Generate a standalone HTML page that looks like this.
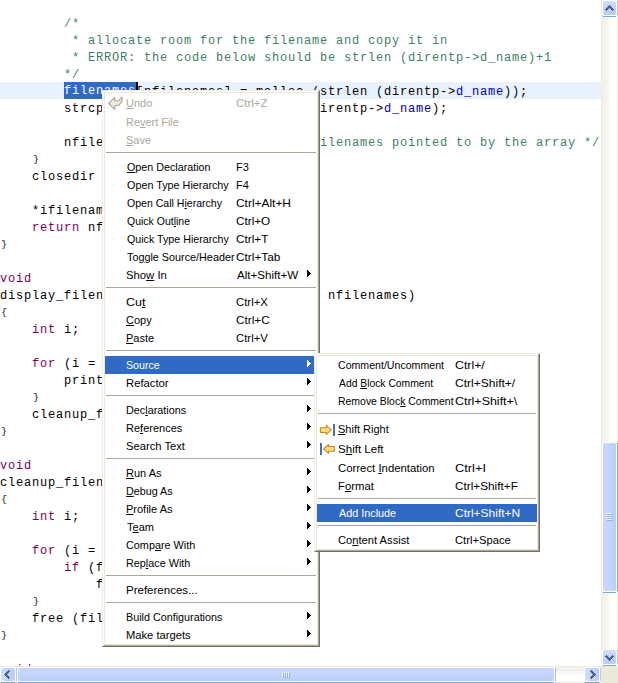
<!DOCTYPE html>
<html><head><meta charset="utf-8">
<style>
*{margin:0;padding:0;box-sizing:border-box}
html,body{width:618px;height:683px;overflow:hidden;background:#fff}
body{position:relative;font-family:"Liberation Sans",sans-serif}
#code{position:absolute;left:0;top:0;width:601px;height:666px;overflow:hidden;background:#fff}
.curline{position:absolute;left:0;top:82px;width:601px;height:17px;background:#E8F2FE}
.ln{position:absolute;left:0;height:17px;line-height:17px;white-space:pre;font-family:"Liberation Mono",monospace;font-size:12px;letter-spacing:0.8px;color:#000;padding-top:2px}
.k{color:#7F0055}
.br{display:inline-block;width:8px;text-align:center;font-size:9.5px;letter-spacing:0;vertical-align:top;line-height:15px;position:relative;top:0px}
.c{color:#3F7F5F}
.f{color:#0000C0}
.sel{background:#316AC5;color:#fff;display:inline-block;height:17px;margin-top:-2px;padding-top:2px;vertical-align:top;line-height:15px}
.caret{position:absolute;left:136px;top:82px;width:2px;height:17px;background:#000}
.menu{position:absolute;background:#fff;border-style:solid;border-width:1px;border-color:#F1EFE2 #716F64 #716F64 #F1EFE2}
.menu>.m2{border-style:solid;border-width:1px;border-color:#fff #ACA899 #ACA899 #fff;width:100%;height:100%}
.menu>.m2>.m3{border:1px solid #ECE9D8;width:100%;height:100%;background:#fff}
.it{position:relative;font-size:11px;color:#000}
.it .lb,.it .sc{position:absolute;white-space:pre;line-height:18px;height:18px;transform-origin:0 0}
.dis{color:#ACA899}
.hi{background:#316AC5;color:#fff}
.sep{position:relative;height:9px}
.sep i{position:absolute;left:1px;right:1px;top:3px;height:1px;background:#ACA899}
u{text-decoration:underline;text-decoration-thickness:1px;text-underline-offset:1px}
.ar{position:absolute;left:202px;top:4px;fill:#000}
.hi .ar{fill:#fff}
.ico{position:absolute}
#mm{left:102px;top:90px;width:218px;height:557px}
#mm .m3{padding-top:0}
#sm{left:314px;top:353px;width:226px;height:199px}
/* scrollbars */
#vs{position:absolute;left:601px;top:0;width:17px;height:666px;background:linear-gradient(90deg,#EDEBE3 0 1px,#F3F2EA 1px 5px,#F6F5F1 5px 7px,#FCFCF6 7px 9px,#FFFFFF 9px 16px,#EDECE6 16px 17px)}
#hs{position:absolute;left:0;top:666px;width:601px;height:17px;background:linear-gradient(180deg,#EDEBE3 0 1px,#F3F2EA 1px 5px,#F6F5F1 5px 7px,#FCFCF6 7px 9px,#FFFFFF 9px 16px,#EDECE6 16px 17px)}
#corner{position:absolute;left:601px;top:666px;width:17px;height:17px;background:#ECE9D8}
.sb{position:absolute}
.sbw{position:absolute;border:1px solid #FFFFFF;border-radius:3px;background:#FFFFFF}
.sbb{position:absolute;border-radius:2px}
.vbody{background:linear-gradient(180deg,#D2DEFD 0%,#C3D3FC 45%,#B7CBF8 100%)}
.hbody{background:linear-gradient(90deg,#D2DEFD 0%,#C3D3FC 45%,#B7CBF8 100%)}
.tvb{background:linear-gradient(90deg,#CBD5FD 0%,#C6D6FC 40%,#BCD1FB 80%,#B4CCFA 100%)}
.thb{background:linear-gradient(180deg,#CBD5FD 0%,#C6D6FC 40%,#BCD1FB 80%,#B4CCFA 100%)}
.sh{position:absolute;background:#84A6DD}
.grip{position:absolute}
</style></head><body>
<div id="code">
<div class="curline"></div>
<div class="ln" style="top:14px"><span class="c">        /*</span></div>
<div class="ln" style="top:31px"><span class="c">         * allocate room for the filename and copy it in</span></div>
<div class="ln" style="top:48px"><span class="c">         * ERROR: the code below should be strlen (direntp-&gt;d_name)+1</span></div>
<div class="ln" style="top:65px"><span class="c">        */</span></div>
<div class="ln" style="top:82px">        <span class="sel">filenames</span>[nfilenames] = malloc (strlen (direntp-&gt;<span class="f">d_name</span>));</div>
<div class="ln" style="top:99px">        strcpy (filenames[nfilenames], direntp-&gt;<span class="f">d_name</span>);</div>
<div class="ln" style="top:116px"></div>
<div class="ln" style="top:133px">        nfilenames++; <span class="c">/* the number of filenames pointed to by the array */</span></div>
<div class="ln" style="top:150px">    <span class="br">}</span></div>
<div class="ln" style="top:167px">    closedir (dirp);</div>
<div class="ln" style="top:184px"></div>
<div class="ln" style="top:201px">    *ifilenames = filenames;</div>
<div class="ln" style="top:218px">    <span class="k">return</span> nfilenames;</div>
<div class="ln" style="top:235px"><span class="br">}</span></div>
<div class="ln" style="top:252px"></div>
<div class="ln" style="top:269px"><span class="k">void</span></div>
<div class="ln" style="top:286px">display_filenames (<span class="k">char</span> **filenames, <span class="k">int</span> nfilenames)</div>
<div class="ln" style="top:303px"><span class="br">{</span></div>
<div class="ln" style="top:320px">    <span class="k">int</span> i;</div>
<div class="ln" style="top:337px"></div>
<div class="ln" style="top:354px">    <span class="k">for</span> (i = 0; i &lt; nfilenames; i++) <span class="br">{</span></div>
<div class="ln" style="top:371px">        printf (&quot;%s\n&quot;, filenames[i]);</div>
<div class="ln" style="top:388px">    <span class="br">}</span></div>
<div class="ln" style="top:405px">    cleanup_filenames (filenames, nfilenames);</div>
<div class="ln" style="top:422px"><span class="br">}</span></div>
<div class="ln" style="top:439px"></div>
<div class="ln" style="top:456px"><span class="k">void</span></div>
<div class="ln" style="top:473px">cleanup_filenames (<span class="k">char</span> **filenames, <span class="k">int</span> nfilenames)</div>
<div class="ln" style="top:490px"><span class="br">{</span></div>
<div class="ln" style="top:507px">    <span class="k">int</span> i;</div>
<div class="ln" style="top:524px"></div>
<div class="ln" style="top:541px">    <span class="k">for</span> (i = 0; i &lt; nfilenames; i++) <span class="br">{</span></div>
<div class="ln" style="top:558px">        <span class="k">if</span> (filenames[i] != NULL)</div>
<div class="ln" style="top:575px">            free (filenames[i]);</div>
<div class="ln" style="top:592px">    <span class="br">}</span></div>
<div class="ln" style="top:609px">    free (filenames);</div>
<div class="ln" style="top:626px"><span class="br">}</span></div>
<div class="ln" style="top:643px"></div>
<div class="ln" style="top:660px"><span class="k">void</span></div>
<div class="caret"></div>
</div>
<div id="vs"></div><div id="hs"></div><div class="sbw" style="left:602px;top:0px;width:15px;height:16px"></div><div class="sbb vbody" style="left:603px;top:1px;width:13px;height:14px"></div><div class="sh" style="left:603px;top:16px;width:13px;height:1px;background:#84A6DD"></div><div class="sh" style="left:617px;top:1px;width:1px;height:14px;background:#B4CAE8"></div><svg class="sb" width="9" height="6" style="left:605px;top:5px" shape-rendering="crispEdges" fill="#4D6185"><rect x="4" y="0" width="1" height="1"/><rect x="3" y="1" width="1" height="1"/><rect x="4" y="1" width="1" height="1"/><rect x="5" y="1" width="1" height="1"/><rect x="2" y="2" width="1" height="1"/><rect x="3" y="2" width="1" height="1"/><rect x="4" y="2" width="1" height="1"/><rect x="5" y="2" width="1" height="1"/><rect x="6" y="2" width="1" height="1"/><rect x="1" y="3" width="1" height="1"/><rect x="2" y="3" width="1" height="1"/><rect x="3" y="3" width="1" height="1"/><rect x="5" y="3" width="1" height="1"/><rect x="6" y="3" width="1" height="1"/><rect x="7" y="3" width="1" height="1"/><rect x="0" y="4" width="1" height="1"/><rect x="1" y="4" width="1" height="1"/><rect x="2" y="4" width="1" height="1"/><rect x="6" y="4" width="1" height="1"/><rect x="7" y="4" width="1" height="1"/><rect x="8" y="4" width="1" height="1"/><rect x="1" y="5" width="1" height="1"/><rect x="7" y="5" width="1" height="1"/></svg><div class="sbw" style="left:602px;top:442px;width:15px;height:150px"></div><div class="sbb tvb" style="left:603px;top:443px;width:13px;height:148px"></div><div class="sh" style="left:603px;top:592px;width:13px;height:1px;background:#84A6DD"></div><div class="sh" style="left:617px;top:443px;width:1px;height:148px;background:#7EA7CC"></div><svg class="sb" width="7" height="8" style="left:606px;top:513px" shape-rendering="crispEdges"><rect x="0" y="0" width="6" height="1" fill="#EEF3FE"/><rect x="1" y="1" width="6" height="1" fill="#8DB0F4"/><rect x="0" y="2" width="6" height="1" fill="#EEF3FE"/><rect x="1" y="3" width="6" height="1" fill="#8DB0F4"/><rect x="0" y="4" width="6" height="1" fill="#EEF3FE"/><rect x="1" y="5" width="6" height="1" fill="#8DB0F4"/><rect x="0" y="6" width="6" height="1" fill="#EEF3FE"/><rect x="1" y="7" width="6" height="1" fill="#8DB0F4"/></svg><div class="sbw" style="left:602px;top:649px;width:15px;height:16px"></div><div class="sbb vbody" style="left:603px;top:650px;width:13px;height:14px"></div><div class="sh" style="left:603px;top:665px;width:13px;height:1px;background:#84A6DD"></div><div class="sh" style="left:617px;top:650px;width:1px;height:14px;background:#B4CAE8"></div><svg class="sb" width="9" height="6" style="left:605px;top:655px" shape-rendering="crispEdges" fill="#4D6185"><rect x="1" y="0" width="1" height="1"/><rect x="7" y="0" width="1" height="1"/><rect x="0" y="1" width="1" height="1"/><rect x="1" y="1" width="1" height="1"/><rect x="2" y="1" width="1" height="1"/><rect x="6" y="1" width="1" height="1"/><rect x="7" y="1" width="1" height="1"/><rect x="8" y="1" width="1" height="1"/><rect x="1" y="2" width="1" height="1"/><rect x="2" y="2" width="1" height="1"/><rect x="3" y="2" width="1" height="1"/><rect x="5" y="2" width="1" height="1"/><rect x="6" y="2" width="1" height="1"/><rect x="7" y="2" width="1" height="1"/><rect x="2" y="3" width="1" height="1"/><rect x="3" y="3" width="1" height="1"/><rect x="4" y="3" width="1" height="1"/><rect x="5" y="3" width="1" height="1"/><rect x="6" y="3" width="1" height="1"/><rect x="3" y="4" width="1" height="1"/><rect x="4" y="4" width="1" height="1"/><rect x="5" y="4" width="1" height="1"/><rect x="4" y="5" width="1" height="1"/></svg><div class="sbw" style="left:0px;top:667px;width:16px;height:15px"></div><div class="sbb hbody" style="left:1px;top:668px;width:14px;height:13px"></div><div class="sh" style="left:1px;top:682px;width:14px;height:1px;background:#7BA7CC"></div><div class="sh" style="left:16px;top:668px;width:1px;height:13px;background:#B4CAE8"></div><svg class="sb" width="6" height="9" style="left:4px;top:670px" shape-rendering="crispEdges" fill="#4D6185"><rect x="4" y="0" width="1" height="1"/><rect x="3" y="1" width="1" height="1"/><rect x="4" y="1" width="1" height="1"/><rect x="5" y="1" width="1" height="1"/><rect x="2" y="2" width="1" height="1"/><rect x="3" y="2" width="1" height="1"/><rect x="4" y="2" width="1" height="1"/><rect x="1" y="3" width="1" height="1"/><rect x="2" y="3" width="1" height="1"/><rect x="3" y="3" width="1" height="1"/><rect x="0" y="4" width="1" height="1"/><rect x="1" y="4" width="1" height="1"/><rect x="2" y="4" width="1" height="1"/><rect x="1" y="5" width="1" height="1"/><rect x="2" y="5" width="1" height="1"/><rect x="3" y="5" width="1" height="1"/><rect x="2" y="6" width="1" height="1"/><rect x="3" y="6" width="1" height="1"/><rect x="4" y="6" width="1" height="1"/><rect x="3" y="7" width="1" height="1"/><rect x="4" y="7" width="1" height="1"/><rect x="5" y="7" width="1" height="1"/><rect x="4" y="8" width="1" height="1"/></svg><div class="sbw" style="left:17px;top:667px;width:538px;height:15px"></div><div class="sbb thb" style="left:18px;top:668px;width:536px;height:13px"></div><div class="sh" style="left:18px;top:682px;width:536px;height:1px;background:#7BA7CC"></div><div class="sh" style="left:555px;top:668px;width:1px;height:13px;background:#9DB9DE"></div><svg class="sb" width="8" height="7" style="left:282px;top:672px" shape-rendering="crispEdges"><rect x="0" y="0" width="1" height="5" fill="#EEF3FE"/><rect x="1" y="1" width="1" height="5" fill="#8DB0F4"/><rect x="2" y="0" width="1" height="5" fill="#EEF3FE"/><rect x="3" y="1" width="1" height="5" fill="#8DB0F4"/><rect x="4" y="0" width="1" height="5" fill="#EEF3FE"/><rect x="5" y="1" width="1" height="5" fill="#8DB0F4"/><rect x="6" y="0" width="1" height="5" fill="#EEF3FE"/><rect x="7" y="1" width="1" height="5" fill="#8DB0F4"/></svg><div class="sbw" style="left:584px;top:667px;width:16px;height:15px"></div><div class="sbb hbody" style="left:585px;top:668px;width:14px;height:13px"></div><div class="sh" style="left:585px;top:682px;width:14px;height:1px;background:#7BA7CC"></div><div class="sh" style="left:600px;top:668px;width:1px;height:13px;background:#B4CAE8"></div><svg class="sb" width="6" height="9" style="left:590px;top:670px" shape-rendering="crispEdges" fill="#4D6185"><rect x="1" y="0" width="1" height="1"/><rect x="0" y="1" width="1" height="1"/><rect x="1" y="1" width="1" height="1"/><rect x="2" y="1" width="1" height="1"/><rect x="1" y="2" width="1" height="1"/><rect x="2" y="2" width="1" height="1"/><rect x="3" y="2" width="1" height="1"/><rect x="2" y="3" width="1" height="1"/><rect x="3" y="3" width="1" height="1"/><rect x="4" y="3" width="1" height="1"/><rect x="3" y="4" width="1" height="1"/><rect x="4" y="4" width="1" height="1"/><rect x="5" y="4" width="1" height="1"/><rect x="2" y="5" width="1" height="1"/><rect x="3" y="5" width="1" height="1"/><rect x="4" y="5" width="1" height="1"/><rect x="1" y="6" width="1" height="1"/><rect x="2" y="6" width="1" height="1"/><rect x="3" y="6" width="1" height="1"/><rect x="0" y="7" width="1" height="1"/><rect x="1" y="7" width="1" height="1"/><rect x="2" y="7" width="1" height="1"/><rect x="1" y="8" width="1" height="1"/></svg>
<div id="corner"></div>
<div class="menu" id="mm"><div class="m2"><div class="m3">
<div class="it dis" style="height:20px"><svg class="ico" width="24" height="20" viewBox="0 0 24 20" style="left:0;top:0"><path d="M3.6 10.4 L9.8 4.4 L9.8 7.7 L13.6 7.7 L17 4 L17 8.4 L13.8 12.3 L9.8 13 L9.8 16.3 Z" fill="#ECE9D8" stroke="#A9A698" stroke-width="1.1" stroke-linejoin="round"/></svg><span class="lb" style="left:21px;top:1px;transform:scaleX(1.000)"><u>U</u>ndo</span><span class="sc" style="left:131px;top:1px;transform:scaleX(1.036)">Ctrl+Z</span></div>
<div class="it dis" style="height:18px"><span class="lb" style="left:21px;top:0px;transform:scaleX(0.994)">Re<u>v</u>ert File</span></div>
<div class="it dis" style="height:18px"><span class="lb" style="left:21px;top:0px;transform:scaleX(1.000)"><u>S</u>ave</span></div>
<div class="sep"><i></i></div>
<div class="it" style="height:18px"><span class="lb" style="left:22px;top:0px;transform:scaleX(0.976)"><u>O</u>pen Declaration</span><span class="sc" style="left:131px;top:0px;transform:scaleX(1.000)">F3</span></div>
<div class="it" style="height:18px"><span class="lb" style="left:22px;top:0px;transform:scaleX(0.981)">Open Type Hierarchy</span><span class="sc" style="left:131px;top:0px;transform:scaleX(1.000)">F4</span></div>
<div class="it" style="height:18px"><span class="lb" style="left:22px;top:0px;transform:scaleX(0.959)">Open Call H<u>i</u>erarchy</span><span class="sc" style="left:131px;top:0px;transform:scaleX(1.083)">Ctrl+Alt+H</span></div>
<div class="it" style="height:18px"><span class="lb" style="left:22px;top:0px;transform:scaleX(0.954)">Quick Out<u>l</u>ine</span><span class="sc" style="left:131px;top:0px;transform:scaleX(1.067)">Ctrl+O</span></div>
<div class="it" style="height:18px"><span class="lb" style="left:22px;top:0px;transform:scaleX(0.971)">Quick Type Hierarchy</span><span class="sc" style="left:131px;top:0px;transform:scaleX(1.071)">Ctrl+T</span></div>
<div class="it" style="height:18px"><span class="lb" style="left:22px;top:0px;transform:scaleX(0.982)">To<u>g</u>gle Source/Header</span><span class="sc" style="left:131px;top:0px;transform:scaleX(1.077)">Ctrl+Tab</span></div>
<div class="it" style="height:18px"><span class="lb" style="left:21px;top:0px;transform:scaleX(1.027)">Sho<u>w</u> In</span><span class="sc" style="left:132px;top:0px;transform:scaleX(1.053)">Alt+Shift+W</span><svg class="ar" width="4" height="7" viewBox="0 0 4 7" shape-rendering="crispEdges"><rect x="0" y="0" width="1" height="7"/><rect x="1" y="1" width="1" height="5"/><rect x="2" y="2" width="1" height="3"/><rect x="3" y="3" width="1" height="1"/></svg></div>
<div class="sep"><i></i></div>
<div class="it" style="height:18px"><span class="lb" style="left:21px;top:0px;transform:scaleX(1.133)">Cu<u>t</u></span><span class="sc" style="left:131px;top:0px;transform:scaleX(1.034)">Ctrl+X</span></div>
<div class="it" style="height:18px"><span class="lb" style="left:21px;top:0px;transform:scaleX(1.000)"><u>C</u>opy</span><span class="sc" style="left:131px;top:0px;transform:scaleX(1.069)">Ctrl+C</span></div>
<div class="it" style="height:18px"><span class="lb" style="left:21px;top:0px;transform:scaleX(1.000)"><u>P</u>aste</span><span class="sc" style="left:131px;top:0px;transform:scaleX(1.034)">Ctrl+V</span></div>
<div class="sep"><i></i></div>
<div class="it hi" style="height:18px"><span class="lb" style="left:21px;top:0px;transform:scaleX(0.970)">Source</span><svg class="ar" width="4" height="7" viewBox="0 0 4 7" shape-rendering="crispEdges"><rect x="0" y="0" width="1" height="7"/><rect x="1" y="1" width="1" height="5"/><rect x="2" y="2" width="1" height="3"/><rect x="3" y="3" width="1" height="1"/></svg></div>
<div class="it" style="height:18px"><span class="lb" style="left:21px;top:0px;transform:scaleX(1.025)">Refactor</span><svg class="ar" width="4" height="7" viewBox="0 0 4 7" shape-rendering="crispEdges"><rect x="0" y="0" width="1" height="7"/><rect x="1" y="1" width="1" height="5"/><rect x="2" y="2" width="1" height="3"/><rect x="3" y="3" width="1" height="1"/></svg></div>
<div class="sep"><i></i></div>
<div class="it" style="height:18px"><span class="lb" style="left:21px;top:0px;transform:scaleX(0.983)">Dec<u>l</u>arations</span><svg class="ar" width="4" height="7" viewBox="0 0 4 7" shape-rendering="crispEdges"><rect x="0" y="0" width="1" height="7"/><rect x="1" y="1" width="1" height="5"/><rect x="2" y="2" width="1" height="3"/><rect x="3" y="3" width="1" height="1"/></svg></div>
<div class="it" style="height:18px"><span class="lb" style="left:21px;top:0px;transform:scaleX(1.000)">Re<u>f</u>erences</span><svg class="ar" width="4" height="7" viewBox="0 0 4 7" shape-rendering="crispEdges"><rect x="0" y="0" width="1" height="7"/><rect x="1" y="1" width="1" height="5"/><rect x="2" y="2" width="1" height="3"/><rect x="3" y="3" width="1" height="1"/></svg></div>
<div class="it" style="height:18px"><span class="lb" style="left:21px;top:0px;transform:scaleX(1.018)">Search Text</span><svg class="ar" width="4" height="7" viewBox="0 0 4 7" shape-rendering="crispEdges"><rect x="0" y="0" width="1" height="7"/><rect x="1" y="1" width="1" height="5"/><rect x="2" y="2" width="1" height="3"/><rect x="3" y="3" width="1" height="1"/></svg></div>
<div class="sep"><i></i></div>
<div class="it" style="height:18px"><span class="lb" style="left:21px;top:0px;transform:scaleX(1.000)"><u>R</u>un As</span><svg class="ar" width="4" height="7" viewBox="0 0 4 7" shape-rendering="crispEdges"><rect x="0" y="0" width="1" height="7"/><rect x="1" y="1" width="1" height="5"/><rect x="2" y="2" width="1" height="3"/><rect x="3" y="3" width="1" height="1"/></svg></div>
<div class="it" style="height:18px"><span class="lb" style="left:21px;top:0px;transform:scaleX(0.978)"><u>D</u>ebug As</span><svg class="ar" width="4" height="7" viewBox="0 0 4 7" shape-rendering="crispEdges"><rect x="0" y="0" width="1" height="7"/><rect x="1" y="1" width="1" height="5"/><rect x="2" y="2" width="1" height="3"/><rect x="3" y="3" width="1" height="1"/></svg></div>
<div class="it" style="height:18px"><span class="lb" style="left:21px;top:0px;transform:scaleX(1.000)"><u>P</u>rofile As</span><svg class="ar" width="4" height="7" viewBox="0 0 4 7" shape-rendering="crispEdges"><rect x="0" y="0" width="1" height="7"/><rect x="1" y="1" width="1" height="5"/><rect x="2" y="2" width="1" height="3"/><rect x="3" y="3" width="1" height="1"/></svg></div>
<div class="it" style="height:18px"><span class="lb" style="left:22px;top:0px;transform:scaleX(1.000)">T<u>e</u>am</span><svg class="ar" width="4" height="7" viewBox="0 0 4 7" shape-rendering="crispEdges"><rect x="0" y="0" width="1" height="7"/><rect x="1" y="1" width="1" height="5"/><rect x="2" y="2" width="1" height="3"/><rect x="3" y="3" width="1" height="1"/></svg></div>
<div class="it" style="height:18px"><span class="lb" style="left:21px;top:0px;transform:scaleX(0.985)">Comp<u>a</u>re With</span><svg class="ar" width="4" height="7" viewBox="0 0 4 7" shape-rendering="crispEdges"><rect x="0" y="0" width="1" height="7"/><rect x="1" y="1" width="1" height="5"/><rect x="2" y="2" width="1" height="3"/><rect x="3" y="3" width="1" height="1"/></svg></div>
<div class="it" style="height:18px"><span class="lb" style="left:21px;top:0px;transform:scaleX(0.984)">Rep<u>l</u>ace With</span><svg class="ar" width="4" height="7" viewBox="0 0 4 7" shape-rendering="crispEdges"><rect x="0" y="0" width="1" height="7"/><rect x="1" y="1" width="1" height="5"/><rect x="2" y="2" width="1" height="3"/><rect x="3" y="3" width="1" height="1"/></svg></div>
<div class="sep"><i></i></div>
<div class="it" style="height:18px"><span class="lb" style="left:21px;top:0px;transform:scaleX(1.046)">Preferences...</span></div>
<div class="sep"><i></i></div>
<div class="it" style="height:18px"><span class="lb" style="left:21px;top:0px;transform:scaleX(0.979)">Build Configurations</span><svg class="ar" width="4" height="7" viewBox="0 0 4 7" shape-rendering="crispEdges"><rect x="0" y="0" width="1" height="7"/><rect x="1" y="1" width="1" height="5"/><rect x="2" y="2" width="1" height="3"/><rect x="3" y="3" width="1" height="1"/></svg></div>
<div class="it" style="height:18px"><span class="lb" style="left:21px;top:0px;transform:scaleX(1.016)">Make targets</span><svg class="ar" width="4" height="7" viewBox="0 0 4 7" shape-rendering="crispEdges"><rect x="0" y="0" width="1" height="7"/><rect x="1" y="1" width="1" height="5"/><rect x="2" y="2" width="1" height="3"/><rect x="3" y="3" width="1" height="1"/></svg></div>
</div></div></div>
<div class="menu" id="sm"><div class="m2"><div class="m3">
<div class="it" style="height:18px"><span class="lb" style="left:21px;top:0px;transform:scaleX(0.963)">Comment/Uncomment</span><span class="sc" style="left:138px;top:0px;transform:scaleX(1.120)">Ctrl+/</span></div>
<div class="it" style="height:18px"><span class="lb" style="left:22px;top:0px;transform:scaleX(0.939)">Add <u>B</u>lock Comment</span><span class="sc" style="left:138px;top:0px;transform:scaleX(1.094)">Ctrl+Shift+/</span></div>
<div class="it" style="height:18px"><span class="lb" style="left:21px;top:0px;transform:scaleX(0.950)">Remove Bloc<u>k</u> Comment</span><span class="sc" style="left:138px;top:0px;transform:scaleX(1.132)">Ctrl+Shift+\</span></div>
<div class="sep"><i></i></div>
<div class="it" style="height:20px"><svg class="ico" width="24" height="20" viewBox="0 0 24 20" style="left:0;top:0"><path d="M3.4 8.7 H9.3 V6.4 L14.4 10.9 L9.3 15.3 V13.5 H3.4 Z" fill="#FDDC85" stroke="#D08A17" stroke-width="1.1" stroke-linejoin="round"/><rect x="16" y="5" width="2" height="12" fill="#4A6FB0"/></svg><span class="lb" style="left:21px;top:1px;transform:scaleX(1.000)"><u>S</u>hift Right</span></div>
<div class="it" style="height:20px"><svg class="ico" width="24" height="20" viewBox="0 0 24 20" style="left:0;top:0"><rect x="3" y="4" width="2" height="12" fill="#4A6FB0"/><path d="M6.5 10 L11.5 5.5 V7.5 H17.4 V12.3 H11.5 V14.4 Z" fill="#FDDC85" stroke="#D08A17" stroke-width="1.1" stroke-linejoin="round"/></svg><span class="lb" style="left:21px;top:1px;transform:scaleX(1.049)">S<u>h</u>ift Left</span></div>
<div class="it" style="height:18px"><span class="lb" style="left:21px;top:0px;transform:scaleX(1.033)">Correct <u>I</u>ndentation</span><span class="sc" style="left:138px;top:0px;transform:scaleX(1.167)">Ctrl+I</span></div>
<div class="it" style="height:18px"><span class="lb" style="left:21px;top:0px;transform:scaleX(1.030)">F<u>o</u>rmat</span><span class="sc" style="left:138px;top:0px;transform:scaleX(1.071)">Ctrl+Shift+F</span></div>
<div class="sep"><i></i></div>
<div class="it hi" style="height:18px"><span class="lb" style="left:22px;top:0px;transform:scaleX(0.983)">Add Include</span><span class="sc" style="left:138px;top:0px;transform:scaleX(1.088)">Ctrl+Shift+N</span></div>
<div class="sep"><i></i></div>
<div class="it" style="height:18px"><span class="lb" style="left:21px;top:0px;transform:scaleX(1.015)">Co<u>n</u>tent Assist</span><span class="sc" style="left:138px;top:0px;transform:scaleX(1.019)">Ctrl+Space</span></div>
</div></div></div>
</body></html>
